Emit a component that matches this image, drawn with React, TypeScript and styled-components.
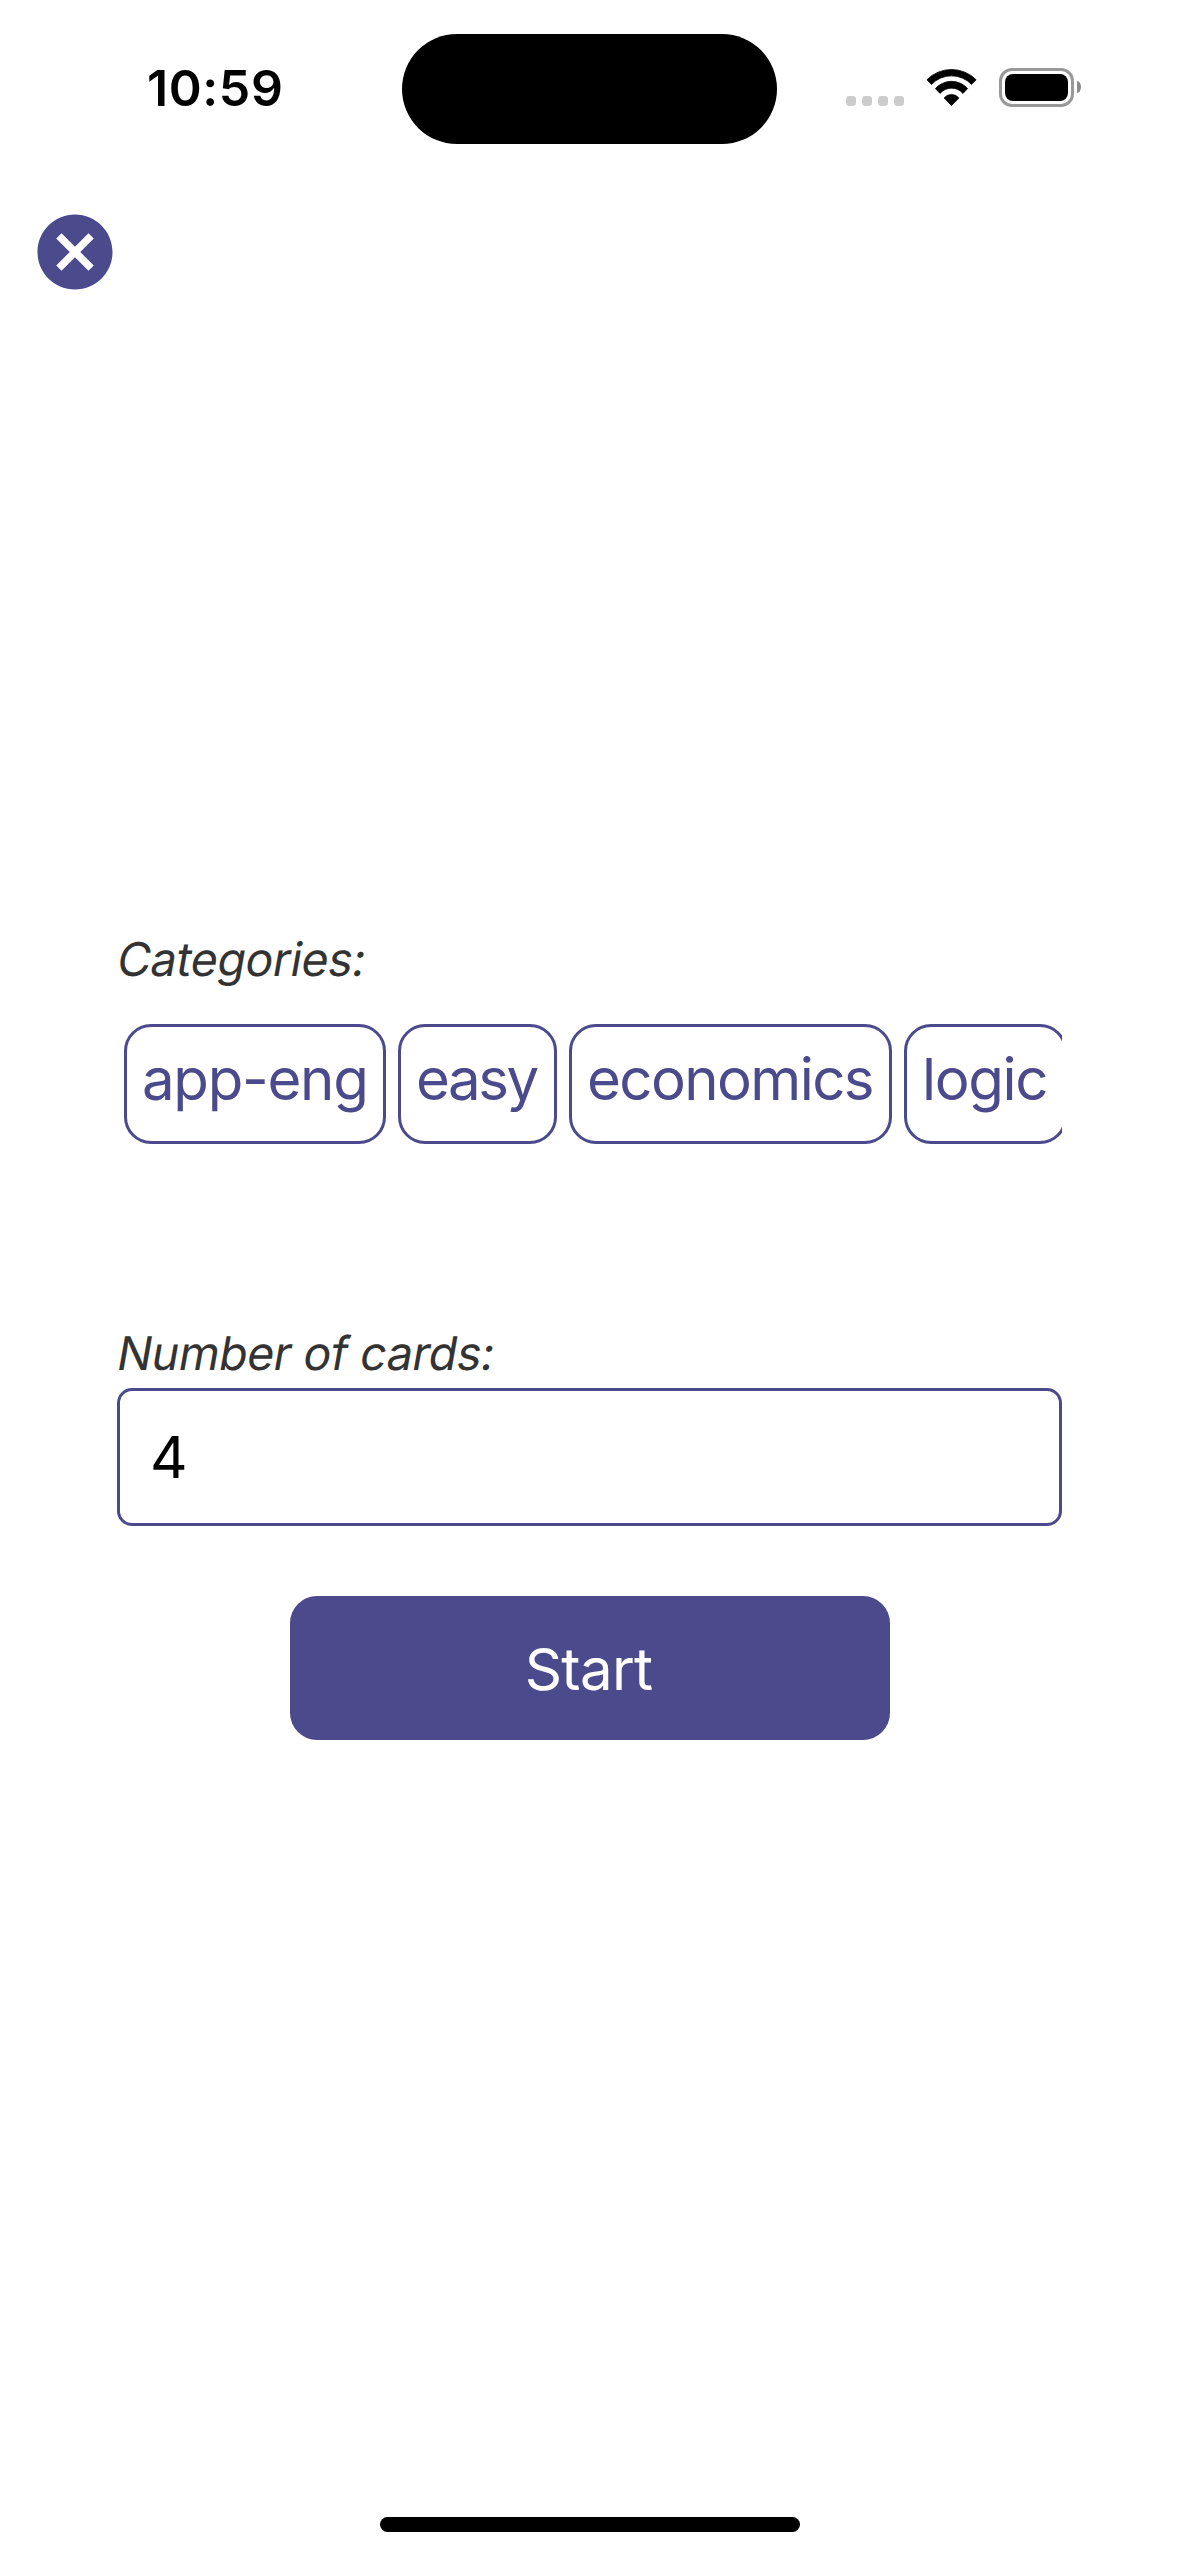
import React from "react";
import styled, { createGlobalStyle } from "styled-components";

const PURPLE = "#4a4a8c";

const GlobalStyle = createGlobalStyle`
  * { box-sizing: border-box; }
  body {
    margin: 0;
    background: #fff;
    font-family: Inter, "Liberation Sans", sans-serif;
  }
`;

const Screen = styled.div`
  width: 1179px;
  height: 2556px;
  display: flex;
  flex-direction: column;
  overflow: hidden;
`;

const StatusBar = styled.header`
  height: 177px;
  display: grid;
  grid-template-columns: 402px 375px 402px;
  align-items: center;
`;

const Clock = styled.time`
  padding-left: 147px;
  font-size: 50px;
  font-weight: 600;
  line-height: 177px;
  letter-spacing: 0.6px;
  color: #000;
`;

const Island = styled.div`
  height: 110px;
  margin-top: 1px;
  border-radius: 55px;
  background: #000;
`;

const StatusIcons = styled.div`
  height: 39px;
  padding-left: 69px;
  display: flex;
  align-items: flex-start;
  margin-top: -2px;
`;

const SignalDots = styled.div`
  display: flex;
  gap: 6px;
  margin: 28px 22px 0 0;
`;

const SignalDot = styled.i`
  width: 10px;
  height: 10px;
  border-radius: 3.5px;
  background: #ccc;
`;

const WifiIcon = styled.svg`
  width: 51px;
  height: 39px;
  margin-right: 22px;
`;

const Battery = styled.div`
  width: 75px;
  height: 39px;
  padding: 3px;
  border: 3px solid #999;
  border-radius: 13px;
`;

const BatteryLevel = styled.div`
  height: 27px;
  border-radius: 8px;
  background: #000;
`;

const BatteryTip = styled.div`
  width: 4px;
  height: 12px;
  margin: 13px 0 0 3px;
  border-radius: 0 4px 4px 0 / 0 6px 6px 0;
  background: #8c8c8c;
`;

const TopBar = styled.nav`
  height: 753px;
  padding: 30px;
`;

const CloseButton = styled.button`
  display: block;
  width: 90px;
  height: 90px;
  padding: 0;
  border: 0;
  background: none;
  color: ${PURPLE};

  svg {
    display: block;
    width: 100%;
    height: 100%;
  }
`;

const Form = styled.main`
  width: 945px;
  margin: 0 auto;
  display: flex;
  flex-direction: column;
  flex: 1;
`;

/* Slanted roman rather than a true italic, so the f keeps its upright form. */
const Label = styled.label`
  align-self: flex-start;
  margin-left: -2px;
  font-size: 46.5px;
  line-height: 58px;
  letter-spacing: -0.45px;
  color: #333;
  transform: skewX(-10deg);
  transform-origin: 0 46px;
`;

const ChipRow = styled.div`
  display: flex;
  gap: 12px;
  margin: 36px 0 180px;
  padding-left: 7px;
  overflow: hidden;
`;

const Chip = styled.button<{ $width: number; $tracking: number }>`
  flex: none;
  width: ${(p) => p.$width}px;
  height: 120px;
  padding: 0 0 11px 15px;
  border: 3px solid ${PURPLE};
  border-radius: 27px;
  background: none;
  font-family: inherit;
  font-size: 58.2px;
  line-height: 74px;
  letter-spacing: ${(p) => p.$tracking}px;
  text-align: left;
  white-space: nowrap;
  color: ${PURPLE};
`;

const CountInput = styled.input`
  width: 100%;
  height: 138px;
  margin-top: 6px;
  padding: 0 30px;
  border: 3px solid ${PURPLE};
  border-radius: 15px;
  background: none;
  outline: none;
  font-family: inherit;
  font-size: 58.2px;
  color: #000;
`;

const StartButton = styled.button`
  width: 600px;
  height: 144px;
  margin: 70px auto 0;
  padding: 2px 2px 0 0;
  border: 0;
  border-radius: 27px;
  background: ${PURPLE};
  font-family: inherit;
  font-size: 58.2px;
  letter-spacing: -0.7px;
  color: #fff;
`;

const HomeIndicator = styled.div`
  width: 420px;
  height: 15px;
  margin: 0 auto 24px;
  border-radius: 7.5px;
  background: #000;
`;

const categories = [
  { name: "app-eng", width: 262, tracking: -1.3 },
  { name: "easy", width: 159, tracking: -2.5 },
  { name: "economics", width: 323, tracking: -1.6 },
  { name: "logic", width: 163, tracking: -1.4 },
];

export default function App() {
  const [count, setCount] = React.useState("4");
  return (
    <>
      <GlobalStyle />
      <Screen>
        <StatusBar>
          <Clock>10:59</Clock>
          <Island />
          <StatusIcons>
            <SignalDots>
              <SignalDot />
              <SignalDot />
              <SignalDot />
              <SignalDot />
            </SignalDots>
            <WifiIcon viewBox="0 0 51 39" stroke="#000" strokeWidth="0.8" strokeLinejoin="round">
              <path d="M0.9 11.8A34.4 34.4 0 0 1 50.1 11.8L45.5 16.4A27.7 27.7 0 0 0 5.5 16.4Z" />
              <path d="M9.4 20.6A21.5 21.5 0 0 1 41.6 20.6L37 25.4A15.2 15.2 0 0 0 14 25.4Z" />
              <path d="M18.1 30A9.6 9.6 0 0 1 32.9 30L25.5 37.5Z" />
            </WifiIcon>
            <Battery>
              <BatteryLevel />
            </Battery>
            <BatteryTip />
          </StatusIcons>
        </StatusBar>
        <TopBar>
          <CloseButton aria-label="Close">
            <svg viewBox="0 0 24 24" fill="currentColor">
              <path d="M12 2C6.47 2 2 6.47 2 12s4.47 10 10 10 10-4.47 10-10S17.53 2 12 2zm5 13.59L15.59 17 12 13.41 8.41 17 7 15.59 10.59 12 7 8.41 8.41 7 12 10.59 15.59 7 17 8.41 13.41 12 17 15.59z" />
            </svg>
          </CloseButton>
        </TopBar>
        <Form>
          <Label as="span">Categories:</Label>
          <ChipRow>
            {categories.map((c) => (
              <Chip key={c.name} $width={c.width} $tracking={c.tracking}>
                {c.name}
              </Chip>
            ))}
          </ChipRow>
          <Label htmlFor="count">Number of cards:</Label>
          <CountInput id="count" value={count} onChange={(e) => setCount(e.target.value)} />
          <StartButton>Start</StartButton>
        </Form>
        <HomeIndicator />
      </Screen>
    </>
  );
}
